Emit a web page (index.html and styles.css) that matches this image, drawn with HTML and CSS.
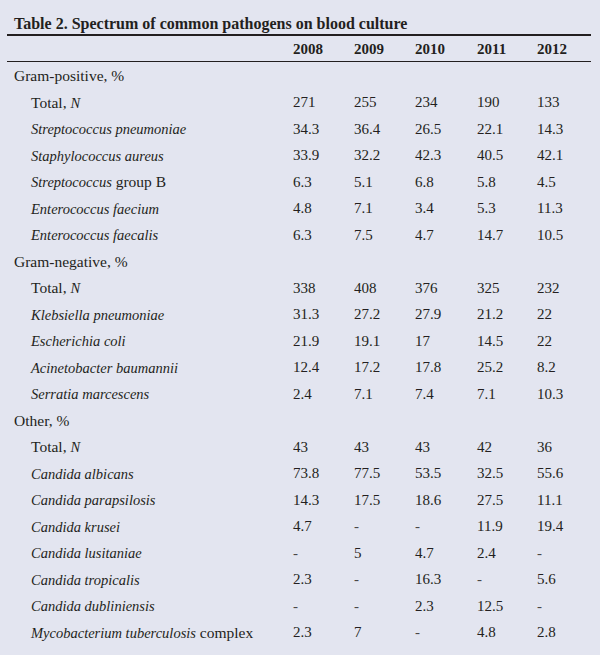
FILE: index.html
```html
<!DOCTYPE html>
<html lang="en">
<head>
<meta charset="utf-8">
<title>Table 2</title>
<link rel="stylesheet" href="styles.css">
</head>
<body>
<div class="page">
  <h1 class="title">Table 2. Spectrum of common pathogens on blood culture</h1>
  <table class="data">
    <colgroup>
      <col class="c-label"><col class="c-num"><col class="c-num"><col class="c-num3"><col class="c-num4"><col class="c-num5">
    </colgroup>
    <thead>
      <tr><th></th><th>2008</th><th>2009</th><th>2010</th><th>2011</th><th>2012</th></tr>
    </thead>
    <tbody>
      <tr class="group first"><td class="grp">Gram-positive, %</td><td></td><td></td><td></td><td></td><td></td></tr>
      <tr><td class="sub">Total, <i>N</i></td><td>271</td><td>255</td><td>234</td><td>190</td><td>133</td></tr>
      <tr><td class="sub"><i>Streptococcus pneumoniae</i></td><td>34.3</td><td>36.4</td><td>26.5</td><td>22.1</td><td>14.3</td></tr>
      <tr><td class="sub"><i>Staphylococcus aureus</i></td><td>33.9</td><td>32.2</td><td>42.3</td><td>40.5</td><td>42.1</td></tr>
      <tr><td class="sub"><i>Streptococcus</i> group B</td><td>6.3</td><td>5.1</td><td>6.8</td><td>5.8</td><td>4.5</td></tr>
      <tr><td class="sub"><i>Enterococcus faecium</i></td><td>4.8</td><td>7.1</td><td>3.4</td><td>5.3</td><td>11.3</td></tr>
      <tr><td class="sub"><i>Enterococcus faecalis</i></td><td>6.3</td><td>7.5</td><td>4.7</td><td>14.7</td><td>10.5</td></tr>
      <tr class="group"><td class="grp">Gram-negative, %</td><td></td><td></td><td></td><td></td><td></td></tr>
      <tr><td class="sub">Total, <i>N</i></td><td>338</td><td>408</td><td>376</td><td>325</td><td>232</td></tr>
      <tr><td class="sub"><i>Klebsiella pneumoniae</i></td><td>31.3</td><td>27.2</td><td>27.9</td><td>21.2</td><td>22</td></tr>
      <tr><td class="sub"><i>Escherichia coli</i></td><td>21.9</td><td>19.1</td><td>17</td><td>14.5</td><td>22</td></tr>
      <tr><td class="sub"><i>Acinetobacter baumannii</i></td><td>12.4</td><td>17.2</td><td>17.8</td><td>25.2</td><td>8.2</td></tr>
      <tr><td class="sub"><i>Serratia marcescens</i></td><td>2.4</td><td>7.1</td><td>7.4</td><td>7.1</td><td>10.3</td></tr>
      <tr class="group"><td class="grp">Other, %</td><td></td><td></td><td></td><td></td><td></td></tr>
      <tr><td class="sub">Total, <i>N</i></td><td>43</td><td>43</td><td>43</td><td>42</td><td>36</td></tr>
      <tr><td class="sub"><i>Candida albicans</i></td><td>73.8</td><td>77.5</td><td>53.5</td><td>32.5</td><td>55.6</td></tr>
      <tr><td class="sub"><i>Candida parapsilosis</i></td><td>14.3</td><td>17.5</td><td>18.6</td><td>27.5</td><td>11.1</td></tr>
      <tr><td class="sub"><i>Candida krusei</i></td><td>4.7</td><td class="dash">-</td><td class="dash">-</td><td>11.9</td><td>19.4</td></tr>
      <tr><td class="sub"><i>Candida lusitaniae</i></td><td class="dash">-</td><td>5</td><td>4.7</td><td>2.4</td><td class="dash">-</td></tr>
      <tr><td class="sub"><i>Candida tropicalis</i></td><td>2.3</td><td class="dash">-</td><td>16.3</td><td class="dash">-</td><td>5.6</td></tr>
      <tr><td class="sub"><i>Candida dubliniensis</i></td><td class="dash">-</td><td class="dash">-</td><td>2.3</td><td>12.5</td><td class="dash">-</td></tr>
      <tr><td class="sub"><i>Mycobacterium tuberculosis</i> complex</td><td>2.3</td><td>7</td><td class="dash">-</td><td>4.8</td><td>2.8</td></tr>
    </tbody>
  </table>
</div>
</body>
</html>
```

FILE: styles.css
```css
html, body {
  margin: 0;
  padding: 0;
  background: #e3e5f0;
}

.page {
  padding: 0 9px 0 7px;
  color: #231f20;
  font-family: "Liberation Serif", "Times New Roman", serif;
  font-size: 15px;
}

.title {
  margin: 0;
  padding: 14px 0 0 7px;
  height: 20px;
  line-height: 20px;
  font-size: 16px;
  font-weight: bold;
  border-bottom: 2px solid #231f20;
}

.data {
  width: 584px;
  border-collapse: collapse;
  table-layout: fixed;
}

.c-label { width: 286px; }
.c-num { width: 61px; }
.c-num3 { width: 62px; }
.c-num4 { width: 60px; }
.c-num5 { width: 54px; }

.data th {
  font-weight: bold;
  text-align: left;
  padding: 2px 0 0 0;
  height: 23px;
  border-bottom: 1px solid #231f20;
}

.data td {
  height: 26.5px;
  padding: 0;
  text-align: left;
  vertical-align: middle;
  white-space: nowrap;
}

.data tr.first td {
  padding-top: 1px;
}

.grp,
.sub {
  font-size: 15.5px;
}

.grp { padding-left: 7px !important; }
.sub { padding-left: 24px !important; }

.sub i {
  font-size: 14.5px;
}

.dash { color: #4a4748; }
```
